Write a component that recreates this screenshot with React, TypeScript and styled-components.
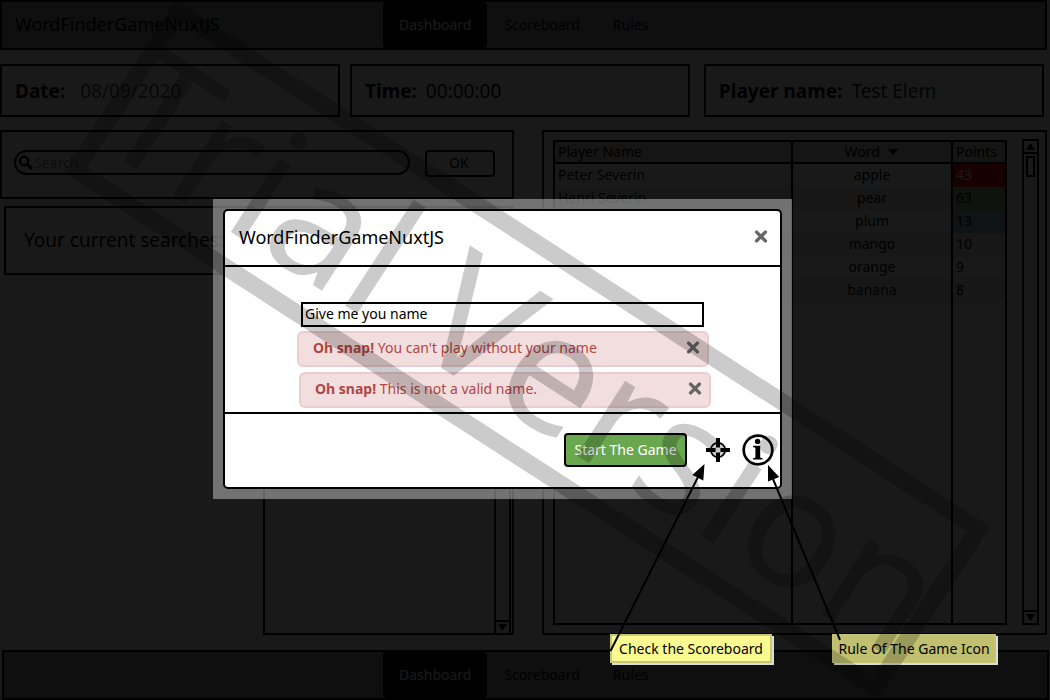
import React from "react";
import styled, { createGlobalStyle } from "styled-components";

const GlobalStyle = createGlobalStyle`
  *, *::before, *::after { box-sizing: border-box; }
  html, body { margin: 0; padding: 0; background: #fff; }
  body, button, input, table {
    font-family: "Noto Sans", "Open Sans", sans-serif;
    font-size: 14px;
    line-height: 20px;
    color: #000;
  }
  h1, h2, p { margin: 0; }
`;

const Page = styled.div`
  position: relative;
  display: flex;
  flex-direction: column;
  min-height: 100vh;
`;

const Bar = styled.div<{ $footer?: boolean }>`
  display: flex;
  height: 50px;
  margin: ${(p) => (p.$footer ? "0 1px 0 2px" : "0 3px 0 0")};
  border: 2px solid #000;
  background: #999;
`;

const Brand = styled.div<{ $width: number }>`
  display: flex;
  align-items: center;
  flex: 0 1 ${(p) => p.$width}px;
  padding: 0 0 2px 13px;
  font-size: 18px;
  line-height: 24px;
  white-space: nowrap;
`;

const Nav = styled.nav`
  display: flex;
  gap: 1px;
`;

const NavLink = styled.a<{ $active?: boolean }>`
  display: flex;
  align-items: center;
  padding: 0 16px;
  border-radius: 4px;
  text-decoration: none;
  color: ${(p) => (p.$active ? "#fff" : "#000")};
  background: ${(p) => (p.$active ? "#000" : "transparent")};
`;

const InfoRow = styled.div`
  display: flex;
  gap: 10px;
  margin: 14px 6px 13px 0;
`;

const InfoCard = styled.div<{ $tone?: string; $gap?: number }>`
  display: flex;
  flex: 1 1 0;
  align-items: center;
  gap: ${(p) => p.$gap ?? 9}px;
  height: 53px;
  padding: 0 13px;
  border: 2px solid #000;
  font-size: 19px;
  line-height: 24px;
  white-space: nowrap;
  &:last-child { margin-left: 4px; }
  span { color: ${(p) => p.$tone ?? "#000"}; }
`;

const Main = styled.main`
  display: grid;
  grid-template-columns: 514fr 505fr;
  column-gap: 28px;
  flex: 1;
  margin: 0 3px 15px 0;
`;

const LeftColumn = styled.div`
  display: flex;
  flex-direction: column;
  gap: 7px;
`;

const Panel = styled.section`
  border: 2px solid #000;
`;

const SearchPanel = styled(Panel)`
  display: flex;
  align-items: flex-start;
  gap: 15px;
  height: 69px;
  padding: 18px 17px 0 12px;
`;

const SearchBox = styled.label`
  display: flex;
  flex: 1;
  align-items: center;
  gap: 1px;
  height: 25px;
  padding: 0 12px 0 2px;
  border: 2px solid #000;
  border-radius: 13px;
`;

const SearchInput = styled.input`
  flex: 1;
  min-width: 0;
  padding: 0;
  border: 0;
  outline: 0;
  background: transparent;
  &::placeholder { color: #888; opacity: 1; }
`;

const OkButton = styled.button`
  width: 70px;
  height: 27px;
  padding: 0 2px 2px 0;
  border: 2px solid #000;
  border-radius: 4px;
  background: #fff;
`;

const SearchesRow = styled.div`
  display: grid;
  grid-template-columns: 1fr 1fr;
  gap: 8px;
  flex: 1;
  align-items: start;
  padding-left: 4px;
`;

const SearchesTitle = styled(Panel)`
  display: flex;
  align-items: center;
  height: 69px;
  padding: 0 0 2px 18px;
  font-size: 19px;
  white-space: nowrap;
`;

const ListPanel = styled(Panel)`
  display: flex;
  justify-content: flex-end;
  align-self: stretch;
`;

const ScorePanel = styled(Panel)`
  display: flex;
  align-items: stretch;
  padding: 8px 6px 8px 9px;
`;

const Table = styled.table`
  flex: 1;
  table-layout: fixed;
  border: 2px solid #000;
  border-right: 0;
  border-spacing: 0;
`;

const Row = styled.tr`
  height: 23px;
  &:nth-child(even) { background: #ebebeb; }
`;

const HeadCell = styled.th<{ $width?: number; $center?: boolean }>`
  width: ${(p) => (p.$width ? `${p.$width}px` : "auto")};
  height: 22px;
  padding: 0 0 0 ${(p) => (p.$center ? 0 : 3)}px;
  border-right: 2px solid #000;
  border-bottom: 2px solid #000;
  background: #d2d2d2;
  font-weight: 400;
  text-align: ${(p) => (p.$center ? "center" : "left")};
`;

const Cell = styled.td<{ $center?: boolean; $fill?: string; $ink?: string }>`
  padding: 0 0 2px ${(p) => (p.$center ? 0 : 3)}px;
  border-right: 2px solid #000;
  text-align: ${(p) => (p.$center ? "center" : "left")};
  background: ${(p) => p.$fill ?? "transparent"};
  color: ${(p) => p.$ink ?? "#000"};
`;

const SortMark = styled.svg`
  margin-left: 4px;
  vertical-align: 1px;
`;

const Track = styled.div<{ $inset?: boolean }>`
  display: flex;
  flex-direction: column;
  width: 17px;
  margin: ${(p) => (p.$inset ? "0 1px 0 0" : "-1px 0 0 15px")};
  border: solid #000;
  border-width: ${(p) => (p.$inset ? "0 2px" : "2px")};
`;

const TrackEnd = styled.span<{ $bottom?: boolean }>`
  display: flex;
  align-items: center;
  justify-content: center;
  height: 13px;
  margin-top: ${(p) => (p.$bottom ? "auto" : "0")};
  border: solid #000;
  border-width: ${(p) => (p.$bottom ? "2px 0 0" : "0 0 2px")};
`;

const Thumb = styled.span`
  width: 9px;
  height: 21px;
  margin: 2px;
  border: 2px solid #000;
`;

const Backdrop = styled.div`
  position: absolute;
  inset: 0;
  display: grid;
  place-items: center;
  padding: 0 45px 2px 0;
  background: rgba(0, 0, 0, 0.9);
`;

const DialogFrame = styled.div`
  width: 579px;
  max-width: 100%;
  padding: 10px;
  background: rgba(200, 200, 200, 0.51);
`;

const Dialog = styled.form`
  border: 2px solid #000;
  border-radius: 5px;
  background: #fff;
`;

const DialogHeader = styled.header`
  display: flex;
  align-items: center;
  justify-content: space-between;
  height: 56px;
  padding: 0 12px 2px 14px;
  border-bottom: 2px solid #000;
`;

const DialogTitle = styled.h1`
  font-size: 18px;
  line-height: 24px;
  font-weight: 400;
`;

const CloseButton = styled.button`
  display: flex;
  padding: 0;
  border: 0;
  background: transparent;
`;

const DialogBody = styled.div`
  display: flex;
  flex-direction: column;
  padding: 35px 69px 4px 72px;
`;

const NameInput = styled.input`
  height: 25px;
  margin: 0 7px 4px 4px;
  padding: 0 2px 2px;
  border: 2px solid #000;
  outline: 0;
`;

const Alert = styled.div<{ $shifted?: boolean }>`
  display: flex;
  align-items: center;
  justify-content: space-between;
  height: 36px;
  margin: ${(p) => (p.$shifted ? "5px 0 0 2px" : "0 2px 0 0")};
  padding: 0 7px 2px 14px;
  border: 2px solid #ebccd1;
  border-radius: 6px;
  background: #f2dede;
  color: #b04744;
`;

const DialogFooter = styled.footer`
  display: flex;
  align-items: center;
  justify-content: flex-end;
  height: 75px;
  padding: 0 6px 2px 0;
  border-top: 2px solid #000;
`;

const StartButton = styled.button`
  width: 123px;
  height: 34px;
  margin-right: 19px;
  padding: 0;
  border: 2px solid #000;
  border-radius: 4px;
  background: #6aa84f;
  color: #fff;
`;

const IconButton = styled.button`
  display: flex;
  padding: 0;
  border: 0;
  background: transparent;
  & + & { margin-left: 12px; }
`;

const Note = styled.aside<{ $left: number; $width: number; $dim?: boolean }>`
  position: absolute;
  left: ${(p) => p.$left}px;
  top: 634px;
  width: ${(p) => p.$width}px;
  height: 29px;
  border: 2px solid ${(p) => (p.$dim ? "#c4c46f" : "#c8c870")};
  background: ${(p) => (p.$dim ? "#c0c070" : "#fafa92")};
  box-shadow: 2px 2px 0 #dcdcdc;
  line-height: 26px;
  text-align: center;
  white-space: nowrap;
`;

const Drawing = styled.svg`
  position: absolute;
  left: 0;
  top: 0;
  pointer-events: none;
`;

const Cross = () => (
  <svg width="14" height="14" viewBox="0 0 14 14" aria-hidden="true">
    <path d="M2.6 2.1 11.4 10.9M11.4 2.1 2.6 10.9" stroke="#666" strokeWidth="3.4" strokeLinecap="round" />
  </svg>
);

const Triangle = ({ up }: { up?: boolean }) => (
  <svg width="9" height="7" viewBox="0 0 9 7" aria-hidden="true">
    <path d={up ? "M0 7 4.500 0 9 7Z" : "M0 0H9L4.500 7Z"} />
  </svg>
);

const scores = [
  { name: "Peter Severin", word: "apple", points: 43, fill: "#f00000", ink: "#fff" },
  { name: "Henri Severin", word: "pear", points: 63, fill: "#8fbc83" },
  { name: "", word: "plum", points: 13, fill: "#a4c2dc" },
  { name: "", word: "mango", points: 10 },
  { name: "", word: "orange", points: 9 },
  { name: "", word: "banana", points: 8 },
];

const Links = () => (
  <Nav>
    <NavLink href="#dashboard" $active>Dashboard</NavLink>
    <NavLink href="#scoreboard">Scoreboard</NavLink>
    <NavLink href="#rules">Rules</NavLink>
  </Nav>
);

const NameDialog = () => (
  <Backdrop>
    <DialogFrame role="dialog" aria-labelledby="dialog-title">
      <Dialog onSubmit={(e) => e.preventDefault()}>
        <DialogHeader>
          <DialogTitle id="dialog-title">WordFinderGameNuxtJS</DialogTitle>
          <CloseButton type="button" aria-label="Close"><Cross /></CloseButton>
        </DialogHeader>
        <DialogBody>
          <NameInput aria-label="Your name" defaultValue="Give me you name" />
          <Alert role="alert">
            <p><strong>Oh snap!</strong> You can't play without your name</p>
            <CloseButton type="button" aria-label="Dismiss"><Cross /></CloseButton>
          </Alert>
          <Alert role="alert" $shifted>
            <p><strong>Oh snap!</strong> This is not a valid name.</p>
            <CloseButton type="button" aria-label="Dismiss"><Cross /></CloseButton>
          </Alert>
        </DialogBody>
        <DialogFooter>
          <StartButton type="submit">Start The Game</StartButton>
          <IconButton type="button" aria-label="Scoreboard">
            <svg width="24" height="24" viewBox="0 0 24 24" fill="none" stroke="#000">
              <circle cx="12" cy="12" r="7.200" strokeWidth="1.700" />
              <path d="M12 0V9.600M12 14.400V24M0 12H9.600M14.400 12H24" strokeWidth="4" />
            </svg>
          </IconButton>
          <IconButton type="button" aria-label="Rules">
            <svg width="32" height="32" viewBox="0 0 32 32">
              <circle cx="16" cy="16" r="14.300" fill="none" stroke="#000" strokeWidth="2.700" />
              <circle cx="15.600" cy="7.400" r="2.700" />
              <path d="M11 11.700H18.200V22.900Q18.200 24 20.600 24.200V25.600H11V24.200Q13.400 24 13.400 22.900V14.400Q13.400 13.300 11 13.100Z" />
            </svg>
          </IconButton>
        </DialogFooter>
      </Dialog>
    </DialogFrame>
  </Backdrop>
);

const Arrows = () => (
  <Drawing width="1050" height="700" viewBox="0 0 1050 700" aria-hidden="true">
    <g stroke="#000" strokeWidth="2">
      <path d="M610.500 651 698 477M840 640 773 479" fill="none" />
    </g>
    <path d="M704.500 464 692.300 475 703.300 480.500ZM768 465 768 481.500 779.200 477Z" />
  </Drawing>
);

const Watermark = () => (
  <Drawing width="1050" height="700" viewBox="0 0 1050 700" aria-hidden="true">
    <g transform="translate(527 349.500) rotate(32.900)" opacity="0.2">
      <rect x="-476.500" y="-94.500" width="953" height="189" fill="none" stroke="#000" strokeWidth="17" />
      <text y="62" textAnchor="middle" fontSize="166" fontFamily="Noto Sans, sans-serif">Trial Version</text>
    </g>
  </Drawing>
);

export default function App() {
  return (
    <>
      <GlobalStyle />
      <Page>
        <Bar as="header">
          <Brand $width={381}>WordFinderGameNuxtJS</Brand>
          <Links />
        </Bar>
        <InfoRow>
          <InfoCard $tone="#555" $gap={15}><strong>Date:</strong><span>08/09/2020</span></InfoCard>
          <InfoCard><strong>Time:</strong><span>00:00:00</span></InfoCard>
          <InfoCard $tone="#222"><strong>Player name:</strong><span>Test Elem</span></InfoCard>
        </InfoRow>
        <Main>
          <LeftColumn>
            <SearchPanel>
              <SearchBox>
                <svg width="15" height="15" viewBox="0 0 15 15" fill="none" stroke="#000" aria-hidden="true">
                  <circle cx="6" cy="6" r="4.200" strokeWidth="2.400" />
                  <path d="M9.200 9.200 12.800 12.800" strokeWidth="3.200" strokeLinecap="round" />
                </svg>
                <SearchInput aria-label="Search" placeholder="Search" />
              </SearchBox>
              <OkButton type="button">OK</OkButton>
            </SearchPanel>
            <SearchesRow>
              <SearchesTitle>Your current searches:</SearchesTitle>
              <ListPanel>
                <Track $inset>
                  <TrackEnd><Triangle up /></TrackEnd>
                  <Thumb />
                  <TrackEnd $bottom><Triangle /></TrackEnd>
                </Track>
              </ListPanel>
            </SearchesRow>
          </LeftColumn>
          <ScorePanel>
            <Table>
              <thead>
                <tr>
                  <HeadCell>Player Name</HeadCell>
                  <HeadCell $width={160} $center>
                    Word{" "}
                    <SortMark width="12" height="7" viewBox="0 0 12 7" aria-hidden="true"><path d="M1 0H11L6 6.500Z" /></SortMark>
                  </HeadCell>
                  <HeadCell $width={54}>Points</HeadCell>
                </tr>
              </thead>
              <tbody>
                {scores.map((s) => (
                  <Row key={s.word}>
                    <Cell>{s.name}</Cell>
                    <Cell $center>{s.word}</Cell>
                    <Cell $fill={s.fill} $ink={s.ink}>{s.points}</Cell>
                  </Row>
                ))}
                <tr><Cell /><Cell /><Cell /></tr>
              </tbody>
            </Table>
            <Track>
              <TrackEnd><Triangle up /></TrackEnd>
              <Thumb />
              <TrackEnd $bottom><Triangle /></TrackEnd>
            </Track>
          </ScorePanel>
        </Main>
        <Bar as="footer" $footer>
          <Brand $width={379} />
          <Links />
        </Bar>
        <NameDialog />
        <Note $left={610} $width={162}>Check the Scoreboard</Note>
        <Note $left={832} $width={164} $dim>Rule Of The Game Icon</Note>
        <Arrows />
        <Watermark />
      </Page>
    </>
  );
}
